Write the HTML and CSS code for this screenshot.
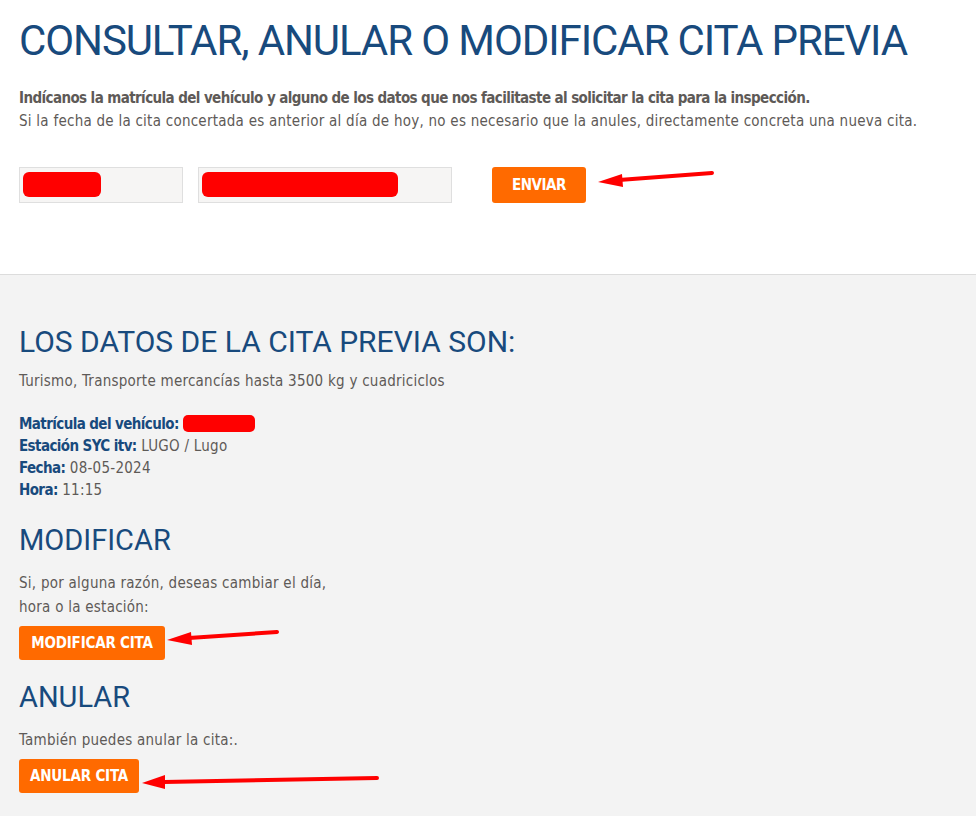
FILE: index.html
```html
<!DOCTYPE html>
<html lang="es">
<head>
<meta charset="utf-8">
<link rel="stylesheet" href="styles.css">
</head>
<body>
<section class="top">
  <h1 class="title">CONSULTAR, ANULAR O MODIFICAR CITA PREVIA</h1>
  <p class="intro"><strong>Indícanos la matrícula del vehículo y alguno de los datos que nos facilitaste al solicitar la cita para la inspección.</strong><br>Si la fecha de la cita concertada es anterior al día de hoy, no es necesario que la anules, directamente concreta una nueva cita.</p>
  <form class="form">
    <div class="field field-a"><span class="redact redact-a"></span></div>
    <div class="field field-b"><span class="redact redact-b"></span></div>
    <span class="btn btn-send">ENVIAR</span>
    <svg class="arrow arrow-send" width="120" height="20" viewBox="0 0 120 20"><path d="M117 3 L24 10" stroke="#f00" stroke-width="4" stroke-linecap="round" fill="none"/><path d="M3 12 L27 4 L28 17 Z" fill="#f00"/></svg>
  </form>
</section>
<section class="result">
  <h2 class="h2">LOS DATOS DE LA CITA PREVIA SON:</h2>
  <p class="type">Turismo, Transporte mercancías hasta 3500 kg y cuadriciclos</p>
  <ul class="data">
    <li><b>Matrícula del vehículo:</b> <span class="redact redact-c"></span></li>
    <li><b>Estación SYC itv:</b> LUGO / Lugo</li>
    <li><b>Fecha:</b> 08-05-2024</li>
    <li><b>Hora:</b> 11:15</li>
  </ul>
  <h3 class="h3">MODIFICAR</h3>
  <p class="text">Si, por alguna razón, deseas cambiar el día,<br>hora o la estación:</p>
  <div class="action">
    <span class="btn btn-mod">MODIFICAR CITA</span>
    <svg class="arrow arrow-mod" width="116" height="18" viewBox="0 0 116 18"><path d="M112 3 L24 9" stroke="#f00" stroke-width="4" stroke-linecap="round" fill="none"/><path d="M2 11 L26 3 L27 16 Z" fill="#f00"/></svg>
  </div>
  <h3 class="h3 h3-anul">ANULAR</h3>
  <p class="text">También puedes anular la cita:.</p>
  <div class="action">
    <span class="btn btn-anul">ANULAR CITA</span>
    <svg class="arrow arrow-anul" width="242" height="18" viewBox="0 0 242 18"><path d="M237 4 L24 8" stroke="#f00" stroke-width="4" stroke-linecap="round" fill="none"/><path d="M2 9 L25 1 L25 15 Z" fill="#f00"/></svg>
  </div>
</section>
</body>
</html>
```
FILE: styles.css
```css
* { box-sizing: border-box; }
html, body { margin: 0; padding: 0; background: #f3f3f3; }
body { font-family: "DejaVu Sans Condensed", "DejaVu Sans", sans-serif; color: #5e5a57; font-size: 15px; letter-spacing: 0.25px; }
.top { background: #fff; padding: 17px 19px 71px; border-bottom: 1px solid #dcdcdc; }
.title { margin: 0; font-family: Roboto, "Liberation Sans", sans-serif; font-weight: 400; font-size: 42px; line-height: 48px; color: #184a7d; letter-spacing: -1.1px; white-space: nowrap; }
.intro { margin: 22px 0 0; line-height: 23px; }
.intro strong, .data b { font-weight: 700; letter-spacing: -0.6px; }
.form { display: flex; align-items: center; margin-top: 34px; position: relative; }
.field { height: 36px; background: #f6f5f4; border: 1px solid #dfdfdf; padding: 4px 3px; }
.field-a { width: 164px; }
.field-b { width: 254px; margin-left: 15px; }
.redact { display: block; background: #ff0000; border-radius: 6px; height: 25px; }
.redact-a { width: 78px; }
.redact-b { width: 196px; }
.redact-c { display: inline-block; width: 72px; height: 17px; vertical-align: -3px; border-radius: 5px; }
.btn { display: inline-block; background: #ff6a00; color: #fff; font-weight: 700; font-size: 15px; border-radius: 3px; letter-spacing: -0.2px; text-align: center; }
.btn-send { margin-left: 40px; width: 94px; height: 36px; line-height: 36px; letter-spacing: -0.5px; }
.arrow { position: absolute; }
.arrow-send { left: 576px; top: 3px; }
.result { padding: 50px 19px 20px; }
.h2 { margin: 0; font-family: Roboto, "Liberation Sans", sans-serif; font-weight: 400; font-size: 30px; line-height: 34px; color: #184a7d; letter-spacing: 0; }
.type { margin: 12px 0 0; line-height: 20px; }
.data { list-style: none; margin: 22px 0 0; padding: 0; line-height: 22px; }
.data b { color: #184a7d; }
.h3 { margin: 22px 0 0; font-family: Roboto, "Liberation Sans", sans-serif; font-weight: 400; font-size: 29px; line-height: 34px; color: #184a7d; letter-spacing: 0; }
.h3-anul { margin-top: 20px; }
.text { margin: 14px 0 0; line-height: 24px; }
.action { position: relative; margin-top: 7px; height: 34px; }
.btn-mod, .btn-anul { height: 34px; line-height: 34px; }
.btn-mod { width: 146px; }
.btn-anul { width: 120px; }
.arrow-mod { left: 146px; top: 3px; }
.arrow-anul { left: 121px; top: 15px; }
```
